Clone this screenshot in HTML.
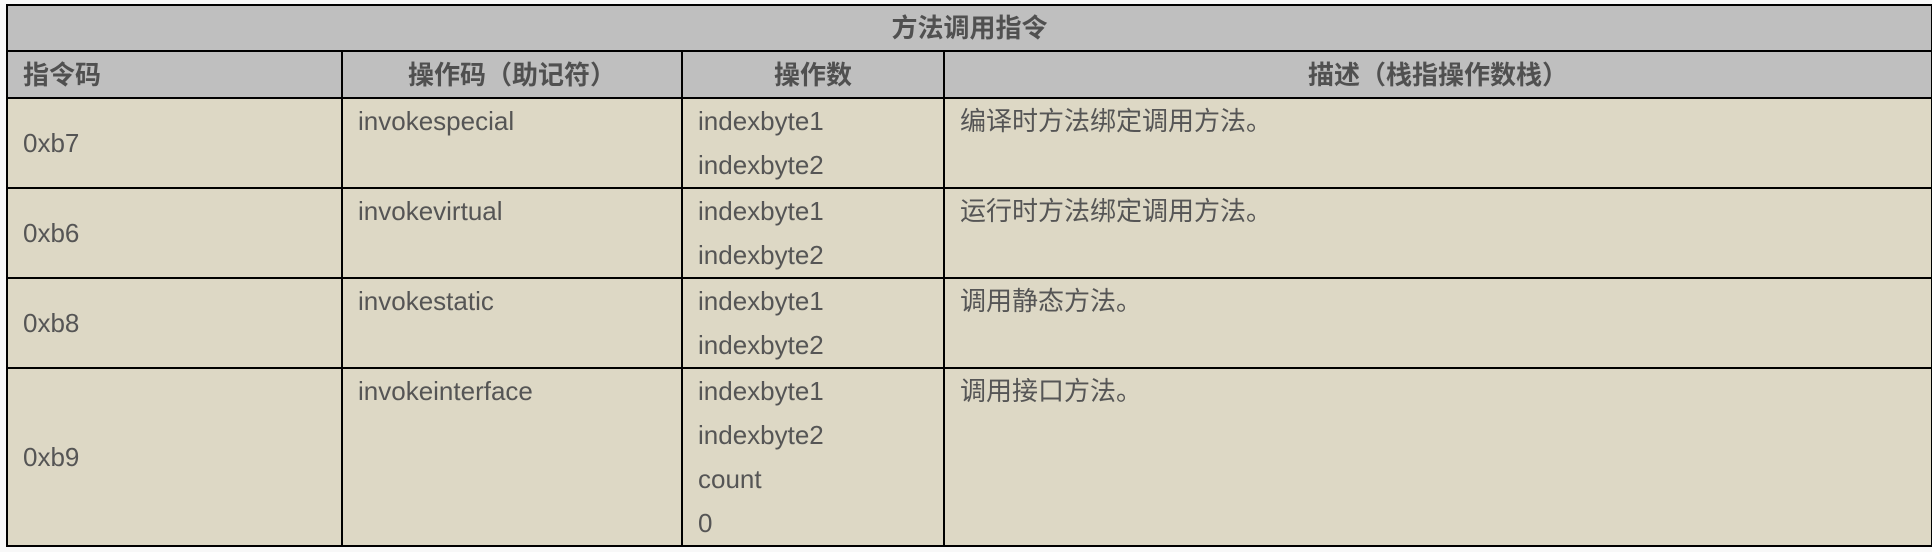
<!DOCTYPE html>
<html><head><meta charset="utf-8"><style>
html,body{margin:0;padding:0;background:#f8f8f8;width:1932px;height:552px;overflow:hidden}
table{position:absolute;left:6px;top:4px;width:1925px;border-collapse:collapse;table-layout:fixed;font-family:"Liberation Sans","Noto Sans CJK SC",sans-serif;font-size:26px;color:#555}
td,th{border:2px solid #000;padding:0 0 0 15px;line-height:44px;vertical-align:top;background:#ddd8c5;text-align:left;overflow:hidden;white-space:nowrap}
th{background:#bfbfbf;font-weight:bold;color:#505050;vertical-align:middle}
.c{text-align:center;padding:0}
.m{vertical-align:middle}
</style></head><body>
<table>
<colgroup><col style="width:335px"><col style="width:340px"><col style="width:262px"><col style="width:988px"></colgroup>
<tr style="height:45px"><th colspan="4" class="c">方法调用指令</th></tr>
<tr style="height:47px"><th>指令码</th><th class="c">操作码（助记符）</th><th class="c">操作数</th><th class="c">描述（栈指操作数栈）</th></tr>
<tr style="height:90px"><td class="m">0xb7</td><td>invokespecial</td><td>indexbyte1<br>indexbyte2</td><td>编译时方法绑定调用方法。</td></tr>
<tr style="height:90px"><td class="m">0xb6</td><td>invokevirtual</td><td>indexbyte1<br>indexbyte2</td><td>运行时方法绑定调用方法。</td></tr>
<tr style="height:90px"><td class="m">0xb8</td><td>invokestatic</td><td>indexbyte1<br>indexbyte2</td><td>调用静态方法。</td></tr>
<tr style="height:178px"><td class="m">0xb9</td><td>invokeinterface</td><td>indexbyte1<br>indexbyte2<br>count<br>0</td><td>调用接口方法。</td></tr>
</table>
</body></html>
